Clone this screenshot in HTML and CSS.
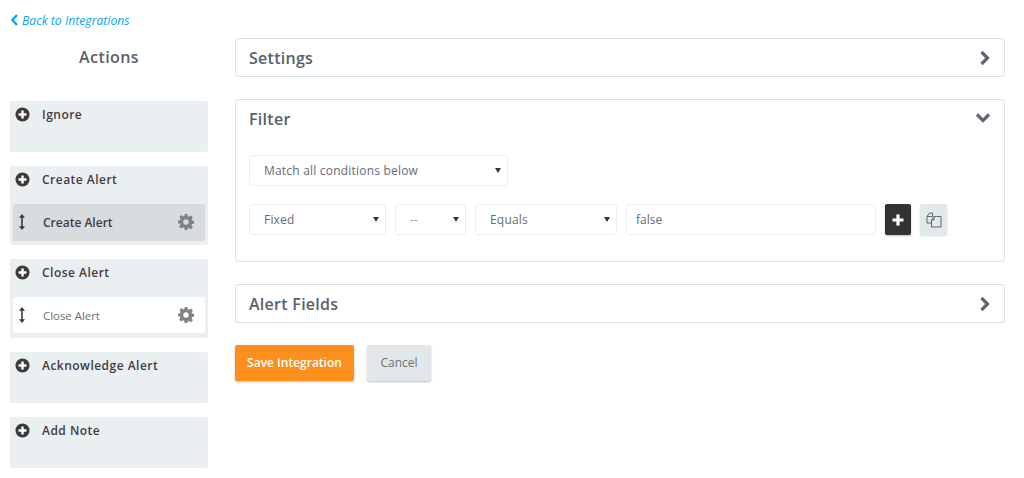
FILE: index.html
```html
<!DOCTYPE html>
<html lang="en">
<head>
<meta charset="utf-8">
<title>Integration</title>
<link rel="stylesheet" href="styles.css">
</head>
<body>
<svg class="defs" width="0" height="0" aria-hidden="true">
  <defs>
    <symbol id="plus-circle" viewBox="0 0 16 16">
      <circle cx="8" cy="8" r="7.500" fill="#3d3a3a"/>
      <path d="M8 3.800v8.400M3.800 8h8.400" stroke="#fff" stroke-width="2.600"/>
    </symbol>
    <symbol id="gear" viewBox="0 0 16 16">
      <path fill="#808285" fill-rule="evenodd" d="M6.600 0h2.800l.4 2.200c.4.1.8.3 1.200.5l1.900-1.300 2 2-1.300 1.900c.2.4.4.8.5 1.200l2.200.4v2.800l-2.200.4c-.1.4-.3.8-.5 1.200l1.300 1.900-2 2-1.900-1.300c-.4.2-.8.4-1.200.5L9.400 16H6.600l-.4-2.200c-.4-.1-.8-.3-1.200-.5l-1.900 1.300-2-2 1.300-1.900c-.2-.4-.4-.8-.5-1.200L0 9.400V6.600l2.200-.4c.1-.4.3-.8.5-1.200L1.400 3.100l2-2L5.300 2.400c.4-.2.8-.4 1.200-.5zM8 5.300a2.700 2.700 0 1 0 0 5.400 2.700 2.700 0 0 0 0-5.400z"/>
    </symbol>
    <symbol id="updown" viewBox="0 0 8 16">
      <path fill="#3d3a3a" d="M4 0l3 3.800H4.800v8.400H7L4 16 1 12.200h2.200V3.800H1z"/>
    </symbol>
    <symbol id="chev-right" viewBox="0 0 12 16">
      <path d="M2.500 2l6 6-6 6" fill="none" stroke="#5e6670" stroke-width="3.200"/>
    </symbol>
  </defs>
</svg>
<div class="page">
  <aside class="sidebar">
    <a class="back" href="#">
      <svg class="back-icon" viewBox="0 0 8 12" aria-hidden="true"><path d="M7 1L2.400 6 7 11" fill="none" stroke="#0aa5f5" stroke-width="2.400"/></svg>
      <span>Back to Integrations</span>
    </a>
    <h2 class="actions-title">Actions</h2>
    <section class="group">
      <div class="group-head"><svg class="plus"><use href="#plus-circle"/></svg><span>Ignore</span></div>
    </section>
    <section class="group">
      <div class="group-head"><svg class="plus"><use href="#plus-circle"/></svg><span>Create Alert</span></div>
      <div class="item item-active">
        <svg class="updown"><use href="#updown"/></svg><span class="item-label">Create Alert</span><svg class="gear"><use href="#gear"/></svg>
      </div>
    </section>
    <section class="group">
      <div class="group-head"><svg class="plus"><use href="#plus-circle"/></svg><span>Close Alert</span></div>
      <div class="item">
        <svg class="updown"><use href="#updown"/></svg><span class="item-label">Close Alert</span><svg class="gear"><use href="#gear"/></svg>
      </div>
    </section>
    <section class="group">
      <div class="group-head"><svg class="plus"><use href="#plus-circle"/></svg><span>Acknowledge Alert</span></div>
    </section>
    <section class="group">
      <div class="group-head"><svg class="plus"><use href="#plus-circle"/></svg><span>Add Note</span></div>
    </section>
  </aside>
  <main class="main">
    <section class="card">
      <div class="card-head"><h3>Settings</h3><svg class="chev"><use href="#chev-right"/></svg></div>
    </section>
    <section class="card">
      <div class="card-head"><h3>Filter</h3><svg class="chev chev-down"><use href="#chev-right"/></svg></div>
      <div class="filter-body">
        <div class="control w-match"><span>Match all conditions below</span><i class="caret"></i></div>
        <div class="filter-row">
          <div class="control w-fixed"><span>Fixed</span><i class="caret"></i></div>
          <div class="control w-dash"><span class="muted">--</span><i class="caret"></i></div>
          <div class="control w-equals"><span>Equals</span><i class="caret"></i></div>
          <div class="control w-input"><span class="value">false</span></div>
          <button class="icon-btn btn-add" type="button" aria-label="Add">
            <svg viewBox="0 0 12 12" width="12" height="12"><path d="M6 .5v11M.5 6h11" stroke="#fff" stroke-width="3.200"/></svg>
          </button>
          <button class="icon-btn btn-copy" type="button" aria-label="Copy">
            <svg viewBox="0 0 16 16" width="16" height="16"><path d="M6.500 1H3.500L1 4.500V11h4M6.500 1v3.500H1" fill="none" stroke="#5e6670" stroke-width="1"/><path d="M10.500 4.500H8L5.500 8v7H15V4.500zM8 4.500V8H5.500" fill="none" stroke="#5e6670" stroke-width="1"/></svg>
          </button>
        </div>
      </div>
    </section>
    <section class="card">
      <div class="card-head"><h3>Alert Fields</h3><svg class="chev"><use href="#chev-right"/></svg></div>
    </section>
    <div class="buttons">
      <button class="btn btn-save" type="button">Save Integration</button>
      <button class="btn btn-cancel" type="button">Cancel</button>
    </div>
  </main>
</div>
</body>
</html>
```

FILE: styles.css
```css
* { box-sizing: border-box; }
html, body { margin: 0; height: 100%; background: #fff; overflow: hidden; }
body { font-family: "Open Sans", "Liberation Sans", sans-serif; color: #4d5560; }
.defs { position: absolute; }

.page { display: flex; padding: 0 19px 0 10px; gap: 27px; }

.sidebar { width: 198px; flex: none; display: flex; flex-direction: column; }
.back { display: flex; align-items: center; gap: 4px; height: 14px; margin-top: 13px; font-size: 12.2px; font-style: italic; color: #0aa5f5; text-decoration: none; }
.back-icon { width: 8px; height: 12px; }
.actions-title { margin: 18px 0 0; height: 24px; line-height: 24px; text-align: center; font-size: 16px; font-weight: 600; color: #59616b; letter-spacing: .4px; }
.group { background: #eaeff2; border-radius: 2px; min-height: 51px; margin-bottom: 14px; padding: 0 3px 5px; }
.actions-title + .group { margin-top: 32px; }
.group-head { display: flex; align-items: center; height: 27px; padding-left: 2px; font-size: 12px; font-weight: 600; color: #3f3d3f; letter-spacing: .48px; }
.plus { width: 15px; height: 15px; margin-right: 12px; flex: none; }
.item { display: flex; align-items: center; height: 36px; margin-top: 11px; padding: 0 11px 0 5px; background: #fff; border-radius: 2px; font-size: 11.4px; color: #6a6f75; }
.item-active { background: #d9dcdf; color: #3f3d3f; font-weight: 600; font-size: 12px; box-shadow: 0 1px 1px rgba(0,0,0,.1); }
.updown { width: 8px; height: 16px; flex: none; }
.item-label { flex: 1; margin-left: 17px; }
.gear { width: 16px; height: 16px; flex: none; }

.main { flex: 1; display: flex; flex-direction: column; gap: 22px; padding-top: 38px; }
.card { border: 1px solid #dbe2e6; border-radius: 3px; background: #fff; }
.card-head { display: flex; align-items: center; justify-content: space-between; height: 37px; padding: 0 13px; }
.card-head h3 { margin: 0; font-size: 16px; font-weight: 600; color: #59616b; letter-spacing: .28px; }
.chev { width: 12px; height: 16px; }
.chev-down { transform: rotate(90deg); margin: -2px 2px 0 0; }

.filter-body { display: flex; flex-direction: column; gap: 18px; padding: 18px 13px 26px; }
.filter-row { display: flex; align-items: center; gap: 9px; }
.control { position: relative; display: flex; align-items: center; height: 31px; padding-left: 14px; border: 1px solid #eceff1; border-radius: 3px; font-size: 12px; letter-spacing: .2px; color: #666c72; }
.caret { position: absolute; right: 6px; top: 12px; border-left: 3px solid transparent; border-right: 3px solid transparent; border-top: 5px solid #33363a; }
.muted { color: #9a9ea3; }
.value { margin-left: -5px; letter-spacing: 0; }
.w-match { width: 259px; }
.w-fixed { width: 137px; }
.w-dash { width: 71px; }
.w-equals { width: 142px; }
.w-input { width: 250px; }

.icon-btn { display: flex; align-items: center; justify-content: center; width: 27px; height: 31px; padding: 0; border: 0; border-radius: 2px; box-shadow: 0 1px 2px rgba(0,0,0,.25); }
.btn-add { width: 26px; background: #333; }
.btn-copy { background: #e1e9eb; box-shadow: 0 1px 2px rgba(0,0,0,.15); }

.buttons { display: flex; gap: 13px; }
.btn { height: 36px; padding: 0 0 2px; border: 0; border-radius: 2px; font-family: inherit; font-size: 12px; box-shadow: 0 1px 2px rgba(0,0,0,.25); }
.btn-save { width: 119px; background: #ff8f1c; color: #fff; font-weight: 600; }
.btn-cancel { width: 64px; background: #e2e8ea; color: #6a7177; }
```
